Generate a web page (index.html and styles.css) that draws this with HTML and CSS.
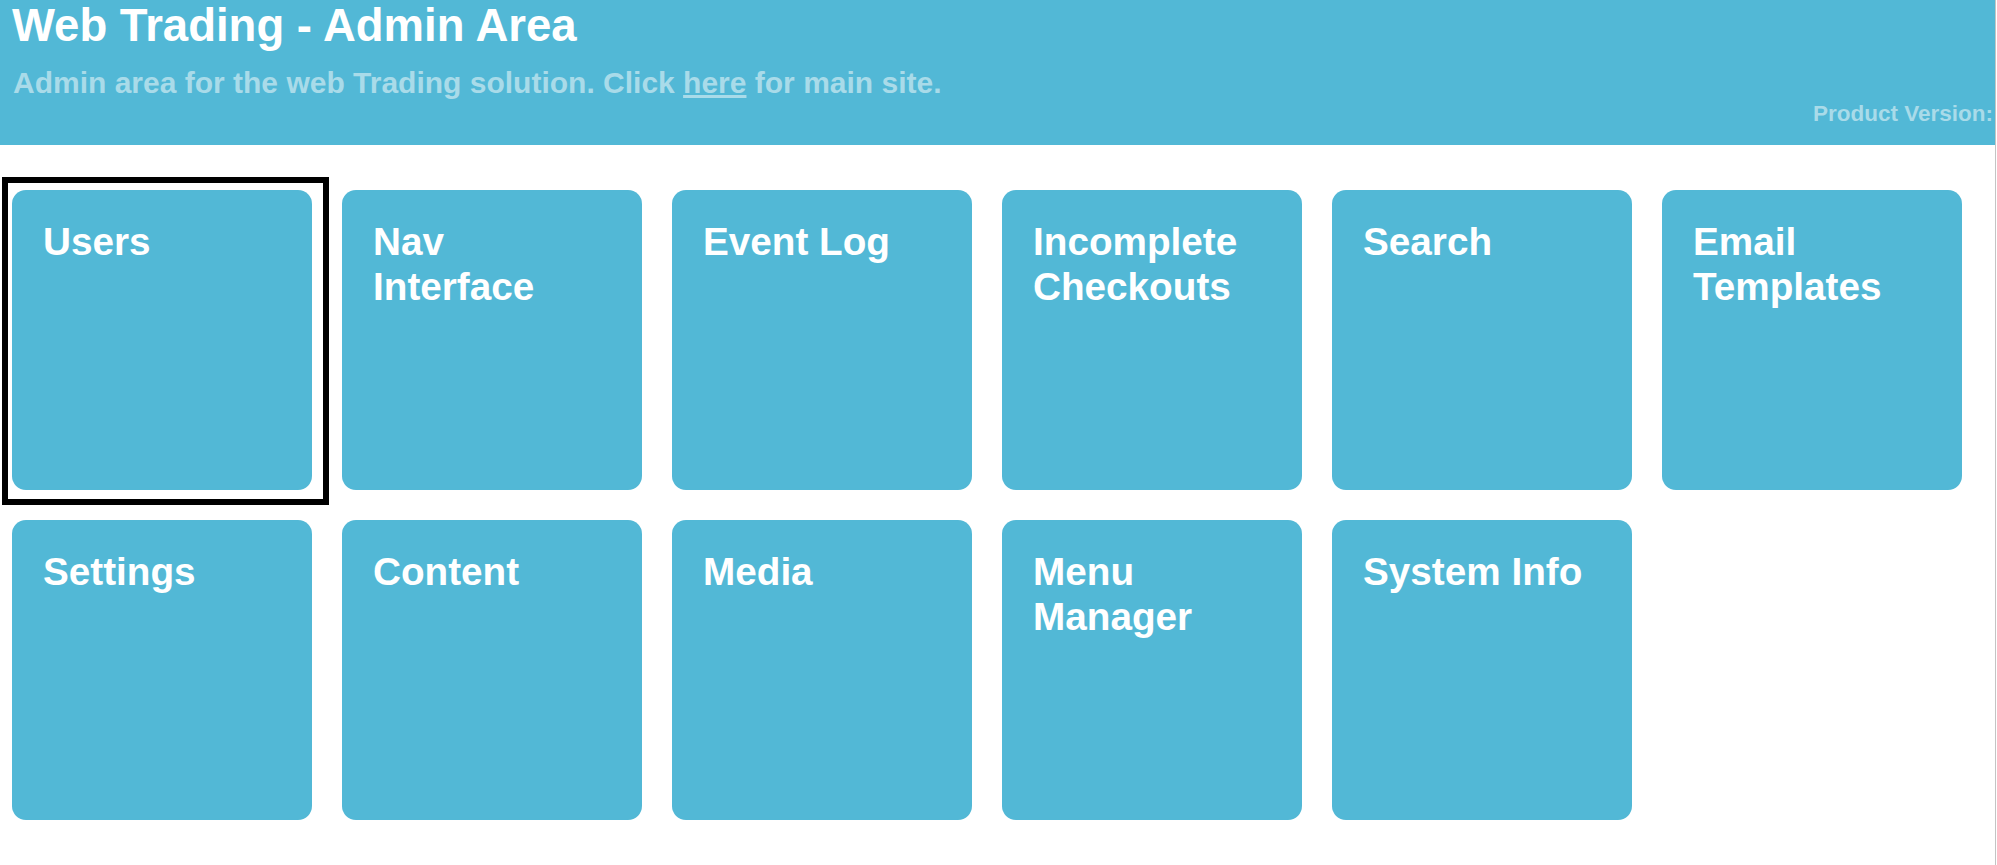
FILE: index.html
```html
<!DOCTYPE html>
<html lang="en">
<head>
<meta charset="utf-8">
<title>Web Trading - Admin Area</title>
<link rel="stylesheet" href="styles.css">
</head>
<body>
<div class="page">
  <header class="header">
    <h1 class="title">Web Trading - Admin Area</h1>
    <p class="subtitle">Admin area for the web Trading solution. Click <a class="sublink" href="#">here</a> for main site.</p>
    <p class="version">Product Version:</p>
  </header>
  <main class="tiles">
    <a class="tile tile-focus" href="#"><span class="tile-label">Users</span></a>
    <a class="tile" href="#"><span class="tile-label">Nav Interface</span></a>
    <a class="tile" href="#"><span class="tile-label">Event Log</span></a>
    <a class="tile" href="#"><span class="tile-label">Incomplete Checkouts</span></a>
    <a class="tile" href="#"><span class="tile-label">Search</span></a>
    <a class="tile" href="#"><span class="tile-label">Email Templates</span></a>
    <a class="tile" href="#"><span class="tile-label">Settings</span></a>
    <a class="tile" href="#"><span class="tile-label">Content</span></a>
    <a class="tile" href="#"><span class="tile-label">Media</span></a>
    <a class="tile" href="#"><span class="tile-label">Menu Manager</span></a>
    <a class="tile" href="#"><span class="tile-label">System Info</span></a>
  </main>
</div>
</body>
</html>
```
FILE: styles.css
```css
html, body {
  margin: 0;
  padding: 0;
  background: #ffffff;
}

body {
  font-family: "Liberation Sans", Arial, sans-serif;
}

.page {
  width: 1995px;
  min-height: 865px;
  border-right: 1px solid #c4c4c4;
  box-sizing: content-box;
}

.header {
  background: #52b8d6;
  height: 145px;
  padding: 0 2px 0 12px;
  box-sizing: border-box;
  display: flex;
  flex-direction: column;
}

.title {
  margin: 0;
  font-size: 45.5px;
  line-height: 52px;
  font-weight: bold;
  color: #ffffff;
}

.subtitle {
  margin: 13px 0 0 1px;
  font-size: 30px;
  line-height: 35px;
  font-weight: bold;
  color: #a9dbe9;
}

.sublink {
  color: #a9dbe9;
  text-decoration: underline;
}

.version {
  margin: 1px 0 0 0;
  align-self: flex-end;
  font-size: 22.5px;
  line-height: 26px;
  font-weight: bold;
  color: #a9dbe9;
}

.tiles {
  display: grid;
  grid-template-columns: repeat(6, 300px);
  grid-auto-rows: 300px;
  gap: 30px;
  padding: 45px 0 0 12px;
}

.tile {
  position: relative;
  display: block;
  background: #52b8d6;
  border-radius: 14px;
  padding: 30px 28px 30px 31px;
  box-sizing: border-box;
  text-decoration: none;
  color: #ffffff;
}

.tile-label {
  display: block;
  font-size: 38.7px;
  line-height: 44.5px;
  font-weight: bold;
  color: #ffffff;
}

.tile-focus::before {
  content: "";
  position: absolute;
  left: -10px;
  top: -13px;
  width: 327px;
  height: 328px;
  border: 6px solid #000000;
  box-sizing: border-box;
}
```
